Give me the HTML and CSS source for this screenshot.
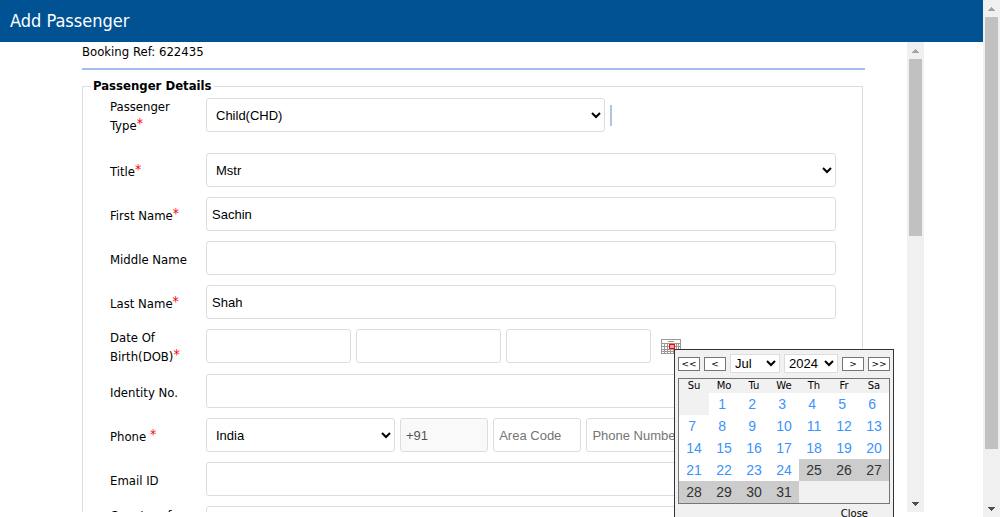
FILE: index.html
```html
<!DOCTYPE html>
<html lang="en">
<head>
<meta charset="utf-8">
<title>Add Passenger</title>
<link rel="stylesheet" href="styles.css">
</head>
<body>
<div class="page">
  <header class="header"><h1 class="title">Add Passenger</h1></header>
  <main class="frame">
    <div class="pane">
      <form class="content">
        <p class="booking">Booking Ref: 622435</p>
        <fieldset class="details">
          <legend class="legend">Passenger Details</legend>
          <div class="row row-type">
            <label class="label" for="ptype">Passenger Type<span class="req">*</span></label>
            <div class="fields">
              <select class="control type" id="ptype"><option>Child(CHD)</option></select>
              <span class="marker"></span>
            </div>
          </div>
          <div class="row">
            <label class="label" for="ptitle">Title<span class="req">*</span></label>
            <div class="fields"><select class="control" id="ptitle"><option>Mstr</option></select></div>
          </div>
          <div class="row">
            <label class="label" for="first">First Name<span class="req">*</span></label>
            <div class="fields"><input class="control" id="first" type="text" value="Sachin"></div>
          </div>
          <div class="row">
            <label class="label" for="middle">Middle Name</label>
            <div class="fields"><input class="control" id="middle" type="text"></div>
          </div>
          <div class="row">
            <label class="label" for="last">Last Name<span class="req">*</span></label>
            <div class="fields"><input class="control" id="last" type="text" value="Shah"></div>
          </div>
          <div class="row row-dob">
            <label class="label" for="day">Date Of Birth(DOB)<span class="req">*</span></label>
            <div class="fields">
              <input class="control dob" id="day" type="text" aria-label="Day">
              <input class="control dob" type="text" aria-label="Month">
              <input class="control dob" type="text" aria-label="Year">
              <button class="picker" type="button" aria-label="Pick a date">
                <svg width="20" height="15" viewBox="0 0 20 15" shape-rendering="crispEdges">
                  <path fill="#fff" d="M0 0h20v15H0z"/>
                  <path fill="none" stroke="#999" d="M.5.5h19v14H.5zM7 2.500h6M0 4.500h20M0 7.500h20M0 10.500h20M0 12.500h20M3.500 4v11M6.500 4v11M9.500 4v11M12.500 4v11M15.500 4v11M17.500 4v11"/>
                  <path fill="#f9a6a6" stroke="#f00" d="M8.500 5.500h5v4h-5z"/>
                </svg>
              </button>
            </div>
          </div>
          <div class="row">
            <label class="label" for="identity">Identity No.</label>
            <div class="fields"><input class="control" id="identity" type="text"></div>
          </div>
          <div class="row">
            <label class="label" for="country">Phone <span class="req">*</span></label>
            <div class="fields">
              <select class="control country" id="country"><option>India</option></select>
              <input class="control code" type="text" value="+91" aria-label="Country code" disabled>
              <input class="control code" type="text" placeholder="Area Code" aria-label="Area code">
              <input class="control number" type="text" placeholder="Phone Number" aria-label="Phone number">
            </div>
          </div>
          <div class="row">
            <label class="label" for="email">Email ID</label>
            <div class="fields"><input class="control" id="email" type="text"></div>
          </div>
          <div class="row row-top">
            <label class="label" for="residence">Country of</label>
            <div class="fields"><input class="control" id="residence" type="text"></div>
          </div>
        </fieldset>
      </form>
      <div class="scrollbar">
        <svg class="arrow" width="7" height="4" viewBox="0 0 7 4" shape-rendering="crispEdges"><path fill="#a3a3a3" d="M3 0h1v1h1v1h1v1h1v1H0V3h1V2h1V1h1z"/></svg>
        <div class="track"><div class="thumb thumb-pane"></div></div>
        <svg class="arrow" width="7" height="4" viewBox="0 0 7 4" shape-rendering="crispEdges"><path fill="#505050" d="M0 0h7v1H6v1H5v1H4v1H3V3H2V2H1V1H0z"/></svg>
      </div>
    </div>
    <div class="calendar">
      <div class="nav">
        <button class="step" type="button">&lt;&lt;</button>
        <button class="step" type="button">&lt;</button>
        <select class="month" aria-label="Month"><option>Jul</option></select>
        <select class="year" aria-label="Year"><option>2024</option></select>
        <button class="step" type="button">&gt;</button>
        <button class="step" type="button">&gt;&gt;</button>
      </div>
      <table class="days">
        <thead>
          <tr><th>Su</th><th>Mo</th><th>Tu</th><th>We</th><th>Th</th><th>Fr</th><th>Sa</th></tr>
        </thead>
        <tbody>
          <tr><td class="empty"></td><td>1&nbsp;</td><td>2&nbsp;</td><td>3&nbsp;</td><td>4&nbsp;</td><td>5&nbsp;</td><td>6&nbsp;</td></tr>
          <tr><td>7&nbsp;</td><td>8&nbsp;</td><td>9&nbsp;</td><td>10</td><td>11</td><td>12</td><td>13</td></tr>
          <tr><td>14</td><td>15</td><td>16</td><td>17</td><td>18</td><td>19</td><td>20</td></tr>
          <tr><td>21</td><td>22</td><td>23</td><td>24</td><td class="off">25</td><td class="off">26</td><td class="off">27</td></tr>
          <tr><td class="off">28</td><td class="off">29</td><td class="off">30</td><td class="off">31</td><td class="empty"></td><td class="empty"></td><td class="empty"></td></tr>
        </tbody>
      </table>
      <button class="close" type="button">Close</button>
    </div>
  </main>
</div>
<div class="scrollbar">
  <svg class="arrow" width="7" height="4" viewBox="0 0 7 4" shape-rendering="crispEdges"><path fill="#a3a3a3" d="M3 0h1v1h1v1h1v1h1v1H0V3h1V2h1V1h1z"/></svg>
  <div class="track"><div class="thumb thumb-page"></div></div>
  <svg class="arrow" width="7" height="4" viewBox="0 0 7 4" shape-rendering="crispEdges"><path fill="#505050" d="M0 0h7v1H6v1H5v1H4v1H3V3H2V2H1V1H0z"/></svg>
</div>
</body>
</html>
```
FILE: styles.css
```css
* { box-sizing: border-box; }

body {
  margin: 0;
  height: 100vh;
  display: flex;
  overflow: hidden;
  background: #fff;
  color: #000;
  font: 13px/19px "DejaVu Sans Condensed", "DejaVu Sans", sans-serif;
}

.page { flex: 1; min-width: 0; display: flex; flex-direction: column; }

.header { padding: 10px; background: #005293; color: #fff; }
.title { margin: 0; font-size: 18px; line-height: 22px; font-weight: normal; }

.frame { flex: 1; min-height: 0; position: relative; padding: 0 59px 5px 82px; }
.pane { height: 100%; display: flex; overflow: hidden; }
.content { flex: 1; min-width: 0; padding-right: 42px; }

.booking {
  margin: 0 0 8px;
  padding-bottom: 7px;
  border-bottom: 2px solid #a0bfee;
}

.details {
  min-width: 0;
  margin: 0 2px 0 0;
  padding: 0 26px 0 27px;
  border: 1px solid #ddd;
}
.legend { margin-left: -19px; padding: 0 2px; font-weight: bold; line-height: 16px; }

.row { display: flex; align-items: center; min-height: 44px; }
.row-type { min-height: 42px; margin-bottom: 12px; }
.row-dob { padding-bottom: 1px; min-height: 45px; }
.row-top { align-items: flex-start; padding-top: 5px; }
.label { flex: none; width: 96px; padding: 2px 16px 0 0; }
.row-top .label { padding-top: 0; }
.req {
  color: #f00;
  font-size: 14px;
  line-height: 1px;
  vertical-align: 2px;
}
.fields { flex: 1; min-width: 0; display: flex; align-items: center; gap: 5px; }

.control {
  flex: 1;
  min-width: 0;
  height: 34px;
  padding: 5px;
  border: 1px solid #ddd;
  border-radius: 3px;
  background: #fff;
  color: #000;
  font: 13px/20px "Liberation Sans", Arial, sans-serif;
}
.control::placeholder { color: #757575; }
.control:disabled { background: #f9f9f9; color: #545454; }
.type { flex: 0 0 399px; }
.marker { width: 2px; height: 21px; background: #b0c4de; }
.dob { flex: 0 0 23%; }
.picker { display: flex; margin-left: 5px; padding: 0; border: 0; background: none; }
.country { flex: 0 0 30%; }
.code { flex: 0 0 14%; }

.scrollbar {
  flex: none;
  width: 17px;
  display: flex;
  flex-direction: column;
  align-items: center;
  background: #f0f0f0;
}
.arrow { margin: 7px 0 6px; }
.track { flex: 1; width: 13px; }
.thumb { background: #c1c1c1; }
.thumb-pane { height: 40.5%; }
.thumb-page { height: 89.5%; }

.calendar {
  position: absolute;
  top: 307px;
  right: 89px;
  width: 220px;
  height: 190px;
  padding: 3px 3px 0;
  border: 1px solid #333;
  background: #f1f1f1;
  font: 10px/14px "DejaVu Sans", sans-serif;
}
.nav { display: flex; align-items: center; gap: 4px; padding-top: 1px; }
.step {
  width: 22px;
  height: 14px;
  padding: 0;
  border: 1px solid #767676;
  background: #fff;
  color: #000;
  font: 9px/10px "DejaVu Sans", sans-serif;
}
.month, .year {
  height: 19px;
  padding: 0;
  border: 1px solid #ddd;
  background: #fff;
  color: #000;
  font: 13px/17px "Liberation Sans", Arial, sans-serif;
}
.month { width: 50px; }
.year { width: 54px; }

.days {
  width: 212px;
  margin-top: 5px;
  border: 1px solid #767676;
  border-collapse: separate;
  border-spacing: 0;
  table-layout: fixed;
}
.days th { height: 14px; padding: 0; font-weight: normal; line-height: 14px; }
.days td {
  height: 22px;
  padding: 0;
  background: #fff;
  color: #3b93ff;
  text-align: center;
  font: 14px/22px "Liberation Sans", Arial, sans-serif;
}
.days .off { background: #ccc; color: #333; }
.days .empty { background: #f1f1f1; }

.close {
  display: block;
  margin: 2px 22px 0 auto;
  padding: 0;
  border: 0;
  background: none;
  color: #000;
  font: 10px/15px "DejaVu Sans", sans-serif;
}
```
